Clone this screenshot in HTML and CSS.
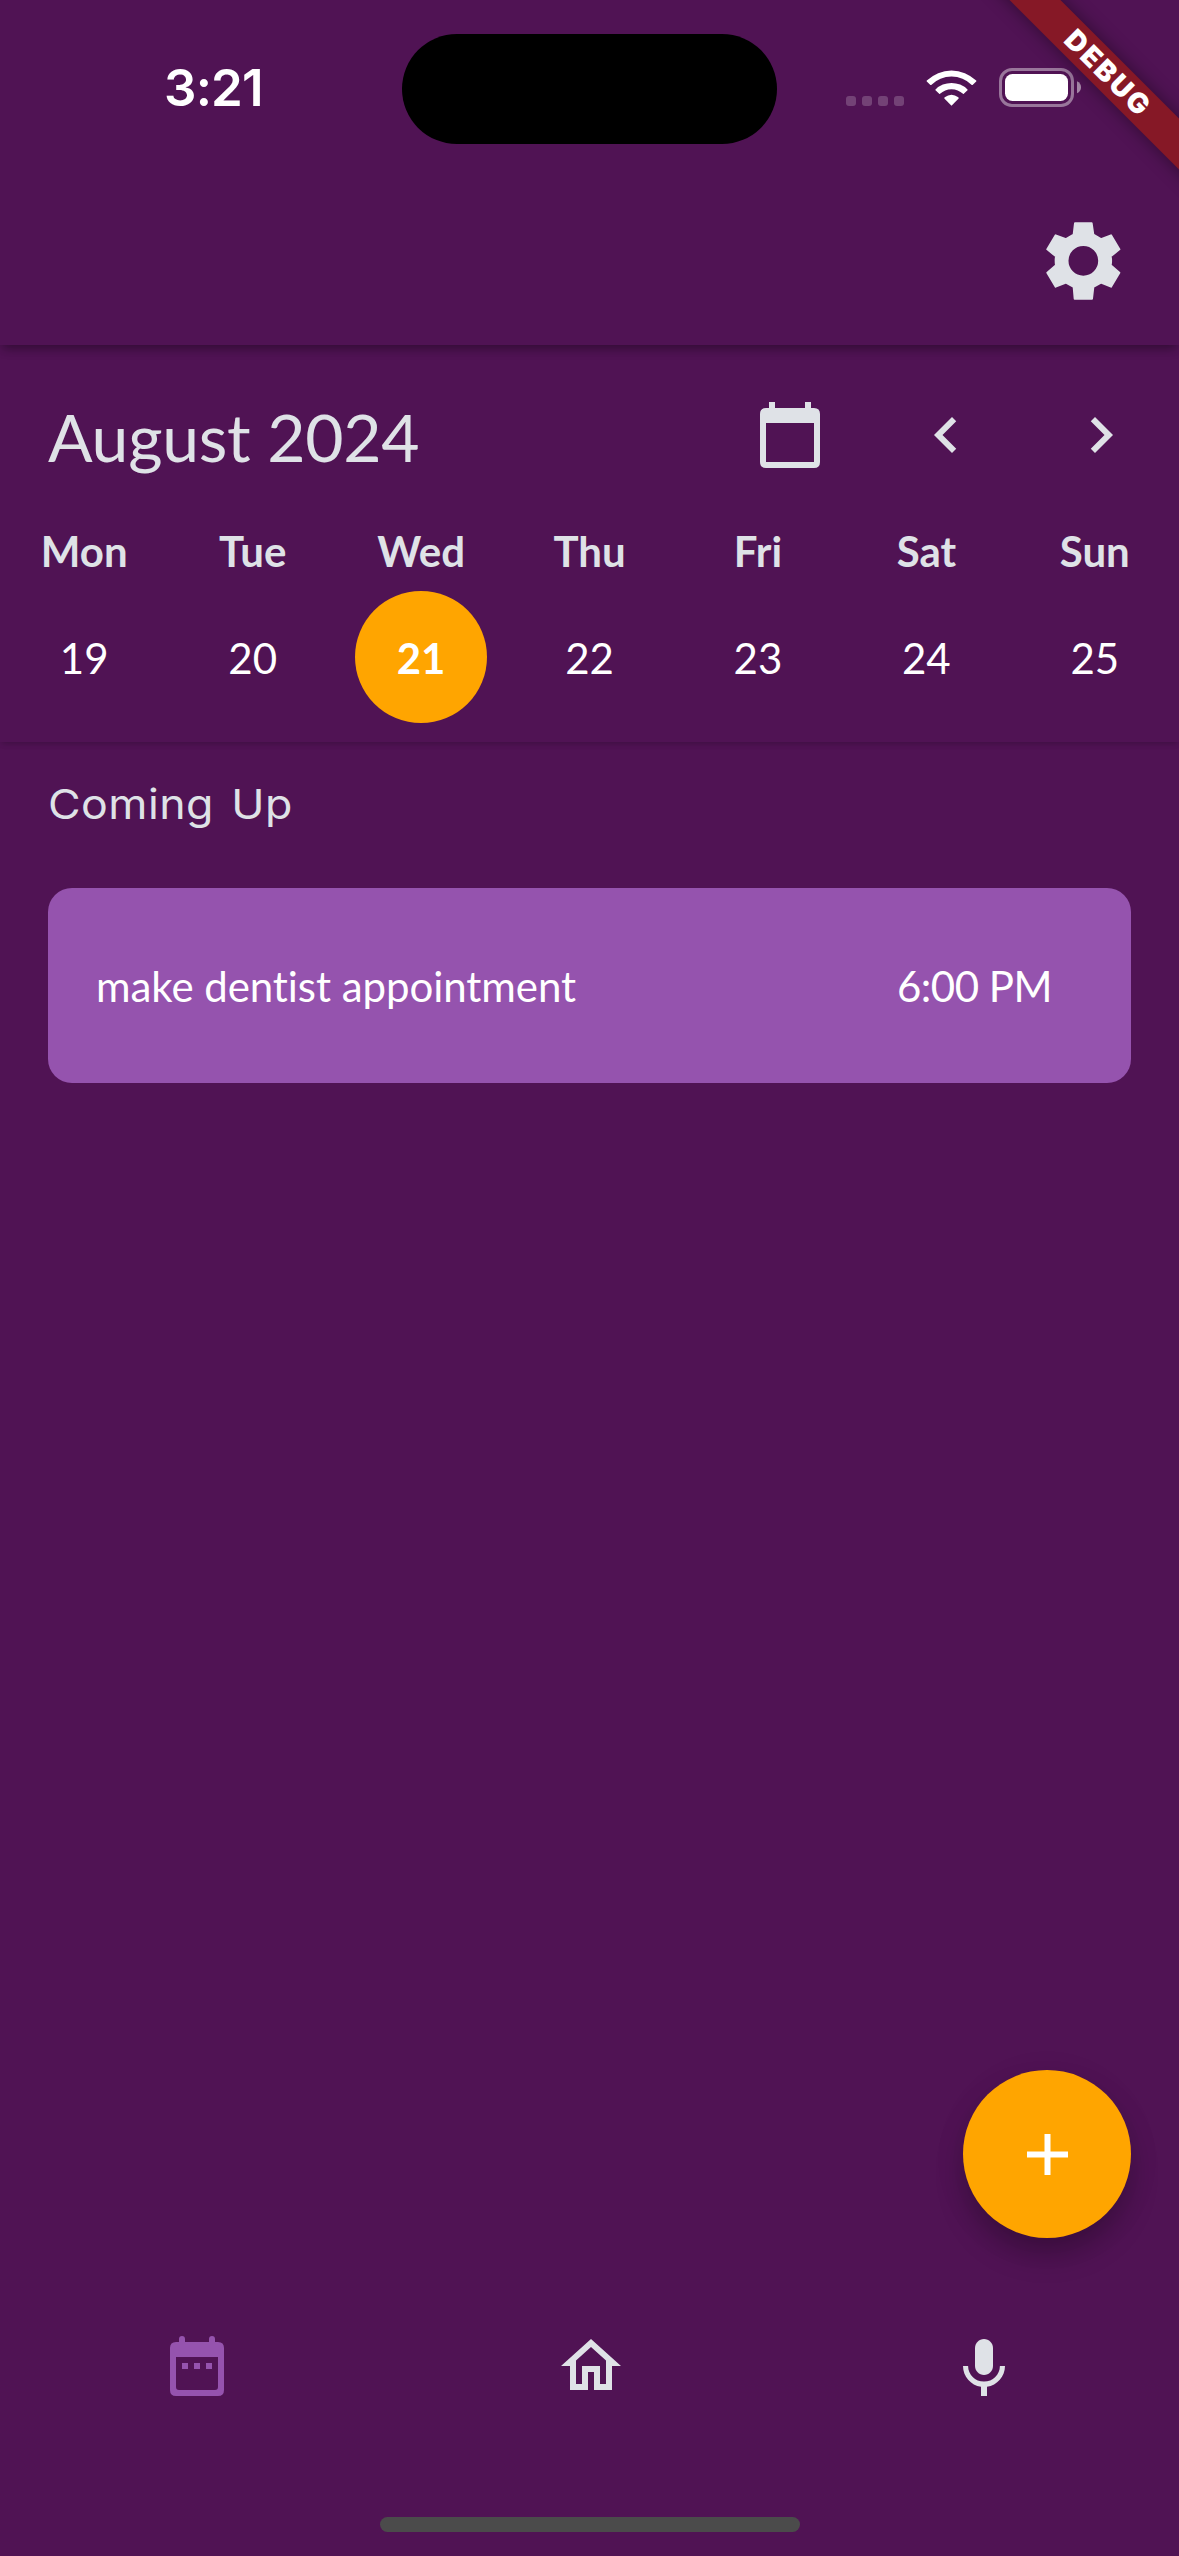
FILE: index.html
```html
<!DOCTYPE html>
<html lang="en">
<head>
<meta charset="utf-8">
<title>August 2024</title>
<link rel="stylesheet" href="styles.css">
</head>
<body>
<div class="screen">
  <header class="appbar">
    <div class="status">
      <span class="clock">3:21</span>
      <div class="island"></div>
      <div class="indicators">
        <div class="signal"><i></i><i></i><i></i><i></i></div>
        <svg class="wifi" viewBox="0 0 51 38" width="51" height="38" fill="#fff">
          <path d="M25.500 36.700L18.600 29.800Q17.900 29 18.700 28.300Q25.500 23.100 32.300 28.300Q33.100 29 32.400 29.800Z"/>
          <path d="M0.800 11.600A35.300 35.300 0 0 1 50.200 11.600Q50.600 12 50.200 12.400L46.600 15.900Q46.200 16.300 45.800 15.900A29 29 0 0 0 5.200 15.900Q4.800 16.300 4.400 15.900L.8 12.400Q.4 12 .8 11.600Z"/>
          <path d="M9.500 20.400A23 23 0 0 1 41.500 20.400Q41.900 20.800 41.500 21.200L37.800 24.800Q37.400 25.200 37 24.800A16.500 16.500 0 0 0 14 24.800Q13.600 25.200 13.200 24.800L9.500 21.200Q9.100 20.800 9.500 20.400Z"/>
        </svg>
        <svg class="battery" viewBox="0 0 82 39" width="82" height="39">
          <rect x="1.500" y="1.500" width="72" height="36" rx="11.500" fill="none" stroke="#fff" stroke-opacity=".42" stroke-width="3"/>
          <rect x="6" y="6" width="63" height="27" rx="7.500" fill="#fff"/>
          <path d="M78 13.200Q82 15 82 19.200T78 25.200Z" fill="#fff" fill-opacity=".5"/>
        </svg>
      </div>
    </div>
    <div class="toolbar">
      <svg class="gear" viewBox="794 663 231 240" width="77" height="80">
        <path fill="#dfe2e7" stroke="#dfe2e7" stroke-width="6" stroke-linejoin="round" fill-rule="evenodd" d="M884 670H934L939 704L962 717.500L992 706L1017 748L991 769Q993.500 782 991 796L1017 818L992 860L962 848L939 861L935 896H883L880 861L857 848L826 860L801 818L827 796Q825 782 827 769L801 748L826 706L857 717.500L880 704ZM909 735A47.500 47.500 0 1 0 909 830A47.500 47.500 0 1 0 909 735Z"/>
      </svg>
    </div>
  </header>

  <section class="calendar">
    <div class="month">
      <h1>August 2024</h1>
      <div class="controls">
        <svg viewBox="0 0 60 66" width="60" height="66" fill="#dfe2e7"><path fill-rule="evenodd" d="M9 0H15V6H45V0H51V6H54Q60 6 60 12V60Q60 66 54 66H6Q0 66 0 60V12Q0 6 6 6H9ZM6 21V60H54V21Z"/></svg>
        <svg class="prev" viewBox="0 0 24 24" width="72" height="72" fill="#dfe2e7"><path d="M15.410 7.410L14 6l-6 6 6 6 1.410-1.410L10.830 12z"/></svg>
        <svg class="next" viewBox="0 0 24 24" width="72" height="72" fill="#dfe2e7"><path d="M10 6L8.590 7.410 13.170 12l-4.580 4.590L10 18l6-6z"/></svg>
      </div>
    </div>
    <div class="week names"><span>Mon</span><span>Tue</span><span>Wed</span><span>Thu</span><span>Fri</span><span>Sat</span><span>Sun</span></div>
    <div class="week days"><span>19</span><span>20</span><span class="today">21</span><span>22</span><span>23</span><span>24</span><span>25</span></div>
  </section>

  <main class="agenda">
    <h2>Coming Up</h2>
    <article class="event"><span>make dentist appointment</span><time>6:00 PM</time></article>
  </main>

  <div class="fab-row">
    <button class="fab" aria-label="Add">
      <svg viewBox="0 0 41 41" width="41" height="41" fill="#fff"><path d="M17.500 0h6v17.500H41v6H23.500V41h-6V23.500H0v-6h17.500z"/></svg>
    </button>
  </div>

  <nav class="tabs">
    <svg viewBox="0 0 72 72" width="72" height="72" fill="#9553ae"><path fill-rule="evenodd" d="M17 12V9a3 3 0 0 1 6 0v3H47V9a3 3 0 0 1 6 0v3H56Q62 12 62 18V60Q62 66 56 66H14Q8 66 8 60V18Q8 12 14 12ZM14 27V57Q14 60 17 60H53Q56 60 56 57V27Z"/><path d="M20 33h6v6h-6zM32 33h6v6h-6zM44 33h6v6h-6z"/></svg>
    <svg viewBox="0 0 24 24" width="72" height="72" fill="#dfe2e7"><path d="M12 5.690l5 4.500V18h-2v-6H9v6H7v-7.810l5-4.500M12 3L2 12h3v8h6v-6h2v6h6v-8h3L12 3z"/></svg>
    <svg viewBox="0 -1 24 24" width="72" height="72" fill="#dfe2e7"><path d="M12 14c1.660 0 3-1.340 3-3V5c0-1.660-1.340-3-3-3S9 3.340 9 5v6c0 1.660 1.340 3 3 3z"/><path d="M17.300 11c0 2.900-2.350 5.200-5.300 5.200s-5.300-2.300-5.300-5.200H5c0 3.530 2.610 6.430 6 6.920V21h2v-3.080c3.390-.49 6-3.390 6-6.920h-1.700z"/></svg>
  </nav>
  <div class="home-indicator"></div>
  <div class="debug-banner"><span>DEBUG</span></div>
</div>
</body>
</html>
```
FILE: styles.css
```css
* { box-sizing: border-box; }
body { margin: 0; background: #501354; }
svg { display: block; flex: none; }

.screen {
  position: relative;
  display: flex;
  flex-direction: column;
  width: 1179px;
  height: 2556px;
  overflow: hidden;
  background: #501354;
  color: #dfe2e7;
  font-family: Lato, "Liberation Sans", sans-serif;
  font-size: 42px;
  font-variant-ligatures: none;
}

/* App bar */
.appbar {
  position: relative;
  z-index: 2;
  flex: none;
  height: 345px;
  background: #501354;
  box-shadow: 0 6px 10px -3px rgba(0, 0, 0, .36), 0 3px 12px rgba(0, 0, 0, .06);
}
.status {
  display: grid;
  grid-template-columns: 402px 375px 402px;
  height: 177px;
  align-items: start;
}
.clock {
  padding: 58px 0 0 164px;
  color: #fff;
  font: 600 51px/60px Inter, sans-serif;
  letter-spacing: -.8px;
}
.island { height: 110px; margin-top: 34px; border-radius: 55px; background: #000; }
.indicators { display: flex; align-items: flex-start; padding: 68px 0 0 69px; }
.signal { display: flex; gap: 6px; padding-top: 28px; }
.signal i { width: 10px; height: 10px; border-radius: 3px; background: rgba(255, 255, 255, .2); }
.wifi { margin: 1px 0 0 22px; }
.battery { margin-left: 22px; }
.toolbar { display: flex; justify-content: flex-end; padding: 44px 57px 0 0; }

/* Week calendar */
.calendar {
  position: relative;
  z-index: 1;
  flex: none;
  height: 397px;
  padding-top: 54px;
  background: #501354;
  box-shadow: 0 3px 6px -2px rgba(0, 0, 0, .2), 0 2px 8px rgba(0, 0, 0, .05);
}
.month { display: flex; justify-content: space-between; height: 72px; padding: 0 42px 0 48px; }
h1 { margin: 0; font-size: 66px; font-weight: 400; line-height: 75px; letter-spacing: -.25px; }
.controls { display: flex; }
.controls svg:first-child { margin-top: 3px; }
.prev { margin-left: 90px; }
.next { margin-left: 83px; }
.week { display: grid; grid-template-columns: repeat(7, 1fr); justify-items: center; }
.names { margin-top: 55px; font-weight: 700; line-height: 50px; }
.days { height: 132px; margin-top: 15px; color: #fff; line-height: 134px; }
.today { width: 132px; height: 132px; border-radius: 50%; background: #ffa500; font-weight: 700; text-align: center; }

/* Agenda */
.agenda { flex: 1; padding: 35px 48px 0; }
h2 {
  margin: 0;
  font: 400 41px/54px Inter, sans-serif;
  letter-spacing: .4px;
  word-spacing: 4px;
  transform: scaleX(1.09);
  transform-origin: left;
}
.event {
  display: flex;
  justify-content: space-between;
  align-items: center;
  height: 195px;
  margin-top: 57px;
  padding: 1px 79px 0 48px;
  border-radius: 24px;
  background: #9553ae;
  color: #fff;
}
.event span { letter-spacing: -.06px; }
.event time { letter-spacing: -.5px; }

/* Floating action button and tabs */
.fab-row { display: flex; justify-content: flex-end; padding-right: 48px; }
.fab {
  display: flex;
  align-items: center;
  justify-content: center;
  width: 168px;
  height: 168px;
  padding: 0;
  border: 0;
  border-radius: 50%;
  background: #ffa500;
  box-shadow: 0 18px 30px -3px rgba(0, 0, 0, .26), 0 6px 36px rgba(0, 0, 0, .06);
}
.tabs { display: flex; justify-content: space-between; padding: 92px 159px 0 162px; }
.home-indicator { width: 420px; height: 15px; margin: 115px auto 24px; border-radius: 8px; background: #4b4b4b; }

/* Corner ribbon */
.debug-banner {
  position: absolute;
  z-index: 3;
  top: 52px;
  left: 955px;
  width: 300px;
  height: 36px;
  padding-left: 9px;
  transform: rotate(45deg);
  background: #861826;
  box-shadow: 0 0 18px rgba(0, 0, 0, .42);
  color: #fff;
  font: 900 28px/36px Inter, sans-serif;
  letter-spacing: 2.4px;
  text-align: center;
}
```
